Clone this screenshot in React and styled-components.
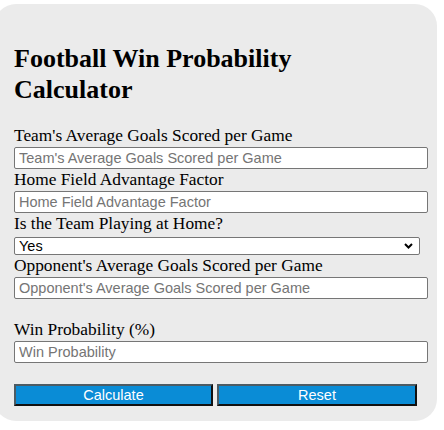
import React from 'react';
import styled, { createGlobalStyle } from 'styled-components';

const GlobalStyle = createGlobalStyle`
  html, body {
    margin: 0;
    padding: 0;
    background: #ffffff;
  }
  body {
    font-family: 'Liberation Serif', 'Times New Roman', serif;
    color: #000;
  }
`;

const Card = styled.div`
  box-sizing: border-box;
  width: 443px;
  margin: 4px 0 0 -6px;
  padding: 0 9px 15px 20px;
  background: #ebebeb;
  border-radius: 22px;
  overflow: hidden;
`;

const Title = styled.h2`
  margin: 39px 0 20px;
  font-family: 'Liberation Serif', 'Times New Roman', serif;
  font-size: 26px;
  line-height: 31px;
  font-weight: 700;
`;

const Label = styled.label`
  display: block;
  font-size: 17.35px;
  line-height: 22px;
  margin-top: ${(p) => (p.$gap ? '20px' : '0')};
`;

const Input = styled.input`
  box-sizing: border-box;
  display: block;
  width: 414px;
  height: 22px;
  margin: 0;
  padding: 0 4px;
  border: 1px solid #767676;
  border-radius: 2px;
  background: #fff;
  font-family: 'Liberation Sans', Arial, sans-serif;
  font-size: 14.5px;
  color: #000;
  &::placeholder {
    color: #757575;
  }
`;

const SelectWrap = styled.div`
  position: relative;
  width: 406px;
  margin-top: 2px;
`;

const Select = styled.select`
  box-sizing: border-box;
  display: block;
  width: 100%;
  height: 18px;
  margin: 0;
  padding: 0 0 0 4px;
  appearance: none;
  border: 1px solid #767676;
  border-radius: 2px;
  background: #fff;
  font-family: 'Liberation Sans', Arial, sans-serif;
  font-size: 14.5px;
  line-height: 16px;
  color: #000;
`;

const Chevron = styled.svg`
  position: absolute;
  right: 7px;
  top: 6px;
  pointer-events: none;
`;

const Buttons = styled.div`
  display: flex;
  gap: 4px;
  margin-top: 21px;
`;

const Button = styled.button`
  box-sizing: border-box;
  width: ${(p) => p.$w}px;
  height: 22px;
  margin: 0;
  padding: 0;
  background: #0a8cd6;
  border: 2px solid;
  border-color: #4d5b63 #111 #111 #4d5b63;
  color: #fff;
  font-family: 'Liberation Sans', Arial, sans-serif;
  font-size: 14.5px;
  line-height: 18px;
  cursor: pointer;
`;

export default function App() {
  return (
    <>
      <GlobalStyle />
      <Card>
        <Title>
          Football Win Probability
          <br />
          Calculator
        </Title>

        <Label>Team's Average Goals Scored per Game</Label>
        <Input placeholder="Team's Average Goals Scored per Game" />

        <Label>Home Field Advantage Factor</Label>
        <Input placeholder="Home Field Advantage Factor" />

        <Label>Is the Team Playing at Home?</Label>
        <SelectWrap>
          <Select defaultValue="yes">
            <option value="yes">Yes</option>
            <option value="no">No</option>
          </Select>
          <Chevron width="9" height="6" viewBox="0 0 9 6">
            <path d="M1 1l3.5 3.5L8 1" fill="none" stroke="#000" strokeWidth="2" />
          </Chevron>
        </SelectWrap>

        <Label>Opponent's Average Goals Scored per Game</Label>
        <Input placeholder="Opponent's Average Goals Scored per Game" />

        <Label $gap>Win Probability (%)</Label>
        <Input placeholder="Win Probability" readOnly />

        <Buttons>
          <Button $w={199}>Calculate</Button>
          <Button $w={200}>Reset</Button>
        </Buttons>
      </Card>
    </>
  );
}
